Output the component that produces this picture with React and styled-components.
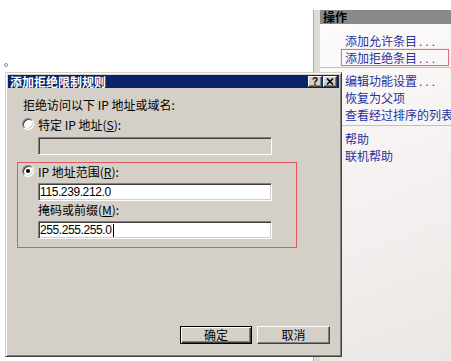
import React from 'react';
import styled, { createGlobalStyle } from 'styled-components';

const GlobalStyle = createGlobalStyle`
  html, body {
    margin: 0;
    padding: 0;
  }
  body {
    width: 451px;
    height: 361px;
    overflow: hidden;
    background: #fff;
    font-family: "Noto Sans CJK SC", "Liberation Sans", sans-serif;
    font-size: 12px;
    color: #000;
  }
`;

const Desktop = styled.div`
  position: relative;
  display: flex;
  width: 451px;
  height: 361px;
  overflow: hidden;
`;

const MiddlePane = styled.div`
  flex: 0 0 313px;
  background: #fff;
`;

const Speck = styled.div`
  width: 2px;
  height: 2px;
  margin: 63px 0 0 4px;
  border: 1px solid #8c8c8c;
  border-radius: 50%;
`;

const ActionsPane = styled.div`
  flex: 1;
  display: flex;
  padding-top: 10px;
  min-width: 0;
`;

const Splitter = styled.div`
  width: 6px;
  border-left: 1px solid #a9a9a9;
  background: #dedbd6;
`;

const ActionsBody = styled.div`
  flex: 1;
  min-width: 0;
  display: flex;
  flex-direction: column;
  overflow: hidden;
  background: linear-gradient(160deg, #fdfbfb 0%, #f3efee 60%, #ebe7e5 100%);
`;

const ActionsHeader = styled.div`
  height: 14px;
  display: flex;
  align-items: center;
  padding-left: 3px;
  background: #8a8a8a;
  font-weight: bold;
  line-height: 1;
  color: #000;
`;

const ActionList = styled.div`
  padding-top: 8px;
`;

const ActionItem = styled.div`
  height: 17px;
  line-height: 17px;
  padding-left: 25px;
  white-space: nowrap;
  color: #26309e;
`;

const Highlight = styled.span`
  display: inline-block;
  box-sizing: border-box;
  height: 17px;
  line-height: 15px;
  margin-left: -4px;
  padding: 0 10px 0 3px;
  border: 1px solid #e8707a;
  box-shadow: 0 0 1px #f2a0a6;
`;

const Dots = styled.span`
  font-family: "Liberation Sans", sans-serif;
  letter-spacing: 3px;
  margin-left: 2px;
`;

const Separator = styled.div`
  height: 1px;
  background: #c4c0bd;
  margin: ${(p) => p.$top}px 0 4px 0;
`;

const Dialog = styled.div`
  position: absolute;
  left: 5px;
  top: 72px;
  width: 337px;
  height: 285px;
  box-sizing: border-box;
  display: flex;
  flex-direction: column;
  background: #d4d0c8;
  border: 1px solid;
  border-color: #d4d0c8 #404040 #404040 #d4d0c8;
  box-shadow: inset 1px 1px #fff, inset -1px -1px #808080;
  padding: 2px;
`;

const TitleBar = styled.div`
  height: 13px;
  display: flex;
  align-items: center;
  padding: 0 2px 0 2px;
  background: #0a246a;
`;

const TitleText = styled.div`
  flex: 1;
  color: #fff;
  font-weight: bold;
  line-height: 13px;
  white-space: nowrap;
`;

const CaptionButton = styled.div`
  width: 14px;
  height: 11px;
  box-sizing: border-box;
  margin-left: 1px;
  display: flex;
  align-items: center;
  justify-content: center;
  background: #d4d0c8;
  border: 1px solid;
  border-color: #fff #404040 #404040 #fff;
  box-shadow: inset -1px -1px #808080;
  font-family: "Liberation Sans", sans-serif;
  font-weight: bold;
  font-size: 10px;
  line-height: 9px;
`;

const DialogBody = styled.div`
  flex: 1;
  display: flex;
  flex-direction: column;
  padding: 11px 9px 10px 15px;
`;

const Prompt = styled.div`
  line-height: 12px;
  white-space: nowrap;
`;

const RadioRow = styled.div`
  display: flex;
  align-items: center;
  gap: 4px;
  height: 14px;
  margin-top: ${(p) => p.$top}px;
  margin-left: ${(p) => p.$left}px;
  white-space: nowrap;
`;

const Radio = styled.span`
  width: 12px;
  height: 12px;
  box-sizing: border-box;
  border-radius: 50%;
  display: flex;
  align-items: center;
  justify-content: center;
  background: #fff;
  border: 1px solid;
  border-color: #808080 #fff #fff #808080;
  box-shadow: inset 1px 1px #404040, inset -1px -1px #d4d0c8;

  &::after {
    content: '';
    width: 4px;
    height: 4px;
    border-radius: 50%;
    background: ${(p) => (p.$checked ? '#000' : 'transparent')};
  }
`;

const Key = styled.span`
  text-decoration: underline;
`;

const TextBox = styled.div`
  width: 234px;
  height: 18px;
  box-sizing: border-box;
  margin-top: ${(p) => p.$top}px;
  margin-left: ${(p) => p.$left}px;
  padding-left: 1px;
  display: flex;
  align-items: center;
  background: ${(p) => (p.$disabled ? '#d4d0c8' : '#fff')};
  border: 1px solid;
  border-color: #808080 #fff #fff #808080;
  box-shadow: inset 1px 1px #404040, inset -1px -1px #d4d0c8;
  font-family: "Liberation Sans", sans-serif;
  font-size: 12px;
  letter-spacing: -0.4px;
`;

const Caret = styled.span`
  display: inline-block;
  width: 1px;
  height: 13px;
  margin-left: 1px;
  background: #000;
`;

const RuleFrame = styled.div`
  margin-top: 7px;
  margin-left: -6px;
  width: 280px;
  box-sizing: border-box;
  padding: 1px 0 8px 4px;
  border: 1px solid #e05a5e;
`;

const FieldLabel = styled.div`
  margin-top: 3px;
  margin-left: 16px;
  line-height: 12px;
  white-space: nowrap;
`;

const ButtonRow = styled.div`
  margin-top: auto;
  display: flex;
  justify-content: flex-end;
  gap: 5px;
`;

const PushButton = styled.button`
  width: ${(p) => p.$width}px;
  height: 18px;
  box-sizing: border-box;
  padding: 0;
  font-family: "Noto Sans CJK SC", sans-serif;
  font-size: 12px;
  line-height: 14px;
  color: #000;
  background: #d4d0c8;
  border: 1px solid;
  border-color: ${(p) => (p.$default ? '#000' : '#fff #404040 #404040 #fff')};
  box-shadow: ${(p) =>
    p.$default
      ? 'inset 1px 1px #fff, inset -1px -1px #404040, inset -2px -2px #808080'
      : 'inset -1px -1px #808080'};
`;

const actionGroups = [
  [{ label: '添加允许条目' }, { label: '添加拒绝条目', marked: true }],
  [{ label: '编辑功能设置' }, { label: '恢复为父项', plain: true }, { label: '查看经过排序的列表' }],
  [{ label: '帮助', plain: true }, { label: '联机帮助', plain: true }],
];

const CloseGlyph = () => (
  <svg width="8" height="7" viewBox="0 0 8 7">
    <path d="M1 0.5 L7 6.5 M7 0.5 L1 6.5" stroke="#000" strokeWidth="1.6" />
  </svg>
);

const App = () => {
  return (
    <>
      <GlobalStyle />
      <Desktop>
        <MiddlePane>
          <Speck />
        </MiddlePane>

        <ActionsPane>
          <Splitter />
          <ActionsBody>
            <ActionsHeader>操作</ActionsHeader>
            <ActionList>
              {actionGroups.map((group, gi) => (
                <React.Fragment key={gi}>
                  {gi > 0 && <Separator $top={gi === 1 ? 1 : 2} />}
                  {group.map((item) => {
                    const text = (
                      <>
                        {item.label}
                        {!item.plain && <Dots>...</Dots>}
                      </>
                    );
                    return (
                      <ActionItem key={item.label}>
                        {item.marked ? <Highlight>{text}</Highlight> : text}
                      </ActionItem>
                    );
                  })}
                </React.Fragment>
              ))}
            </ActionList>
          </ActionsBody>
        </ActionsPane>

        <Dialog>
          <TitleBar>
            <TitleText>添加拒绝限制规则</TitleText>
            <CaptionButton>?</CaptionButton>
            <CaptionButton>
              <CloseGlyph />
            </CaptionButton>
          </TitleBar>
          <DialogBody>
            <Prompt>拒绝访问以下 IP 地址或域名:</Prompt>
            <RadioRow $top={6} $left={-1}>
              <Radio />
              <span>
                特定 IP 地址(<Key>S</Key>):
              </span>
            </RadioRow>
            <TextBox $top={6} $left={15} $disabled />

            <RuleFrame>
              <RadioRow $top={0} $left={0}>
                <Radio $checked />
                <span>
                  IP 地址范围(<Key>R</Key>):
                </span>
              </RadioRow>
              <TextBox $top={5} $left={16}>115.239.212.0</TextBox>
              <FieldLabel>
                掩码或前缀(<Key>M</Key>):
              </FieldLabel>
              <TextBox $top={5} $left={16}>
                255.255.255.0
                <Caret />
              </TextBox>
            </RuleFrame>

            <ButtonRow>
              <PushButton $width={72} $default>
                确定
              </PushButton>
              <PushButton $width={73}>取消</PushButton>
            </ButtonRow>
          </DialogBody>
        </Dialog>
      </Desktop>
    </>
  );
};

export default App;
